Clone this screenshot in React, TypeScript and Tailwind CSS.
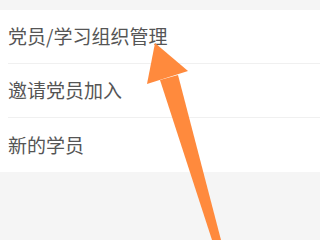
const items = ["党员/学习组织管理", "邀请党员加入", "新的学员"];

export default function App() {
  return (
    <div className="relative w-[320px] h-[240px] overflow-hidden bg-[#f5f5f5] pt-[10px] font-['Noto_Sans_CJK_SC','Noto_Sans',sans-serif]">
      <div className="bg-white">
        {items.map((label, i) => (
          <div key={label} className="pl-[8px]">
            <div
              className={
                i < items.length - 1
                  ? "flex h-[54px] items-center border-b border-[#f0f0f0] text-[19px] text-[#555555]"
                  : "flex h-[54px] items-center text-[19px] text-[#555555]"
              }
            >
              {label}
            </div>
          </div>
        ))}
      </div>

      <svg
        className="absolute left-0 top-0"
        width="320"
        height="240"
        viewBox="0 0 320 240"
      >
        <polygon points="155,43 188,71 147,84" fill="#ff8a3d" />
        <polygon points="160,80 178,75 221,240 212,240" fill="#ff8a3d" />
      </svg>
    </div>
  );
}
